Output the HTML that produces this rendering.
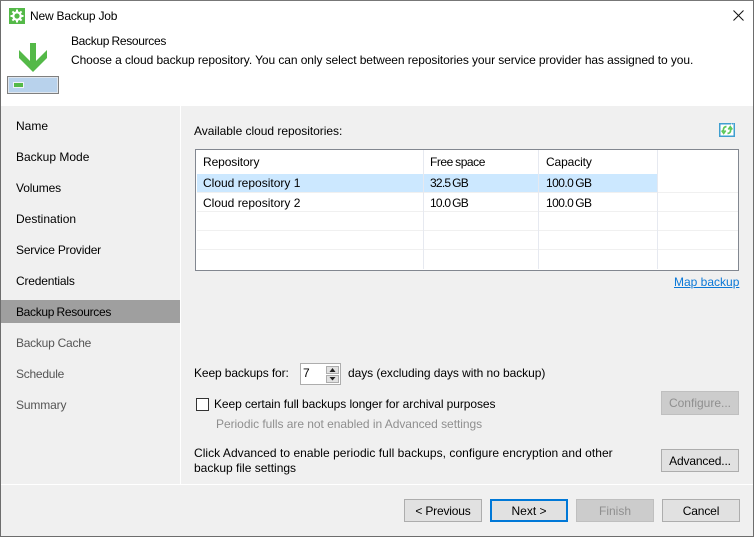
<!DOCTYPE html>
<html><head><meta charset="utf-8"><style>
html,body{margin:0;padding:0;width:754px;height:537px;overflow:hidden;background:#f0f0f0}
body{position:relative;font:12px/16px "Liberation Sans",sans-serif;color:#000}
div{position:absolute;white-space:nowrap}
.btn{box-sizing:border-box;height:23px;border:1px solid #adadad;background:#e1e1e1;text-align:center;line-height:23px}
.dis{background:#ccc;color:#8f8f8f;border-color:#bfbfbf}
.nav{left:16px}
.g{color:#555}
.hl{height:1px;background:#f0f0f0;left:197px;width:541px}
.vl{width:1px;background:#e6e9f0;top:150px;height:119px}
.num{letter-spacing:-.75px;word-spacing:-.8px}
.cap{letter-spacing:-.55px;word-spacing:-.8px}
.br{letter-spacing:-.32px;word-spacing:-.6px}
</style></head><body>
<div style="left:0;top:0;width:754px;height:106px;background:#fff"></div>
<div style="left:180px;top:106px;width:1px;height:378px;background:#fff"></div>
<div style="left:0;top:484px;width:754px;height:1px;background:#fff"></div>
<div style="left:0;top:0;width:754px;height:537px;box-sizing:border-box;border:1px solid #6d6d6d;border-top-color:#777;z-index:9"></div>

<svg style="position:absolute;left:9px;top:8px" width="16" height="16" viewBox="0 0 16 16"><rect width="16" height="16" fill="#54b948"/><circle cx="8" cy="8" r="3.700" fill="none" stroke="#fff" stroke-width="2.200"/><path d="M8 1.500v13M1.500 8h13M3.400 3.400l9.200 9.200M12.600 3.400l-9.200 9.200" stroke="#fff" stroke-width="2" stroke-dasharray="2.400 8.200"/></svg>
<div style="left:30px;top:8px;letter-spacing:-.2px">New Backup Job</div>
<svg style="position:absolute;left:733px;top:10px" width="11" height="11" viewBox="0 0 11 11"><path d="M.5.500l10 10M10.500.500l-10 10" stroke="#111" stroke-width="1" fill="none"/></svg>

<div class="br" style="left:71px;top:33px">Backup Resources</div>
<div style="left:71px;top:52px;letter-spacing:-.085px">Choose a cloud backup repository. You can only select between repositories your service provider has assigned to you.</div>
<svg style="position:absolute;left:19px;top:43px" width="28" height="29" viewBox="0 0 28 29"><path d="M11 0h6v18L28 7v8L14 29 0 15V7l11 11z" fill="#54b948"/></svg>
<div style="left:7px;top:76px;width:52px;height:18px;box-sizing:border-box;border:1px solid #7f7f7f;background:#b8d2ec;box-shadow:inset 0 0 0 1px #dfe6ee"></div>
<div style="left:14px;top:83px;width:9px;height:4px;background:#54b948;box-shadow:0 0 0 1px #eef3f8"></div>

<div class="nav" style="top:118px">Name</div>
<div class="nav" style="top:149px">Backup Mode</div>
<div class="nav" style="top:180px;letter-spacing:-.14px">Volumes</div>
<div class="nav" style="top:211px">Destination</div>
<div class="nav" style="top:242px;letter-spacing:-.19px">Service Provider</div>
<div class="nav" style="top:273px;letter-spacing:-.18px">Credentials</div>
<div style="left:1px;top:300px;width:179px;height:23px;background:#9f9f9f"></div>
<div class="nav br" style="top:304px">Backup Resources</div>
<div class="nav g" style="top:335px;letter-spacing:-.25px">Backup Cache</div>
<div class="nav g" style="top:366px;letter-spacing:-.25px">Schedule</div>
<div class="nav g" style="top:397px;letter-spacing:-.14px">Summary</div>

<div style="left:194px;top:123px;letter-spacing:-.03px">Available cloud repositories:</div>
<svg style="position:absolute;left:719px;top:123px" width="16" height="14" viewBox="0 0 16 14"><rect x=".75" y=".75" width="14.500" height="12.500" fill="#fff" stroke="#3f9fd0" stroke-width="1.500"/><path d="M12 1h1M14 1h.500" stroke="#dfeaf3"/><path d="M7.500 3.500C5 3.800 4 5.500 4.500 8.500M2.700 7.500l2 2.800 2-2.800M8.500 10.500c2.500-.300 3.500-2 3-5M13.300 6.500l-2-2.800-2 2.800" fill="none" stroke="#5ec85a" stroke-width="1.700"/></svg>

<div style="left:195px;top:149px;width:544px;height:122px;box-sizing:border-box;background:#fff;border:1px solid #828790"></div>
<div style="left:197px;top:174px;width:461px;height:18px;background:#cce8ff"></div>
<div class="hl" style="top:192px"></div>
<div class="hl" style="top:211px"></div>
<div class="hl" style="top:230px"></div>
<div class="hl" style="top:249px"></div>
<div class="vl" style="left:423px"></div>
<div class="vl" style="left:538px"></div>
<div class="vl" style="left:657px"></div>
<div style="left:203px;top:154px;letter-spacing:-.1px">Repository</div>
<div style="left:430px;top:154px;letter-spacing:-.45px;word-spacing:-.6px">Free space</div>
<div style="left:546px;top:154px;letter-spacing:-.12px">Capacity</div>
<div style="left:203px;top:175px">Cloud repository 1</div>
<div class="num" style="left:430px;top:175px">32.5 GB</div>
<div class="cap" style="left:546px;top:175px">100.0 GB</div>
<div style="left:203px;top:195px">Cloud repository 2</div>
<div class="num" style="left:430px;top:195px">10.0 GB</div>
<div class="cap" style="left:546px;top:195px">100.0 GB</div>
<div style="left:674px;top:274px;color:#0a78d7;text-decoration:underline">Map backup</div>

<div style="left:194px;top:365px;letter-spacing:-.12px">Keep backups for:</div>
<div style="left:300px;top:363px;width:41px;height:22px;box-sizing:border-box;background:#fff;border:1px solid #adadad"></div>
<div style="left:303px;top:365px">7</div>
<div style="left:326px;top:366px;width:13px;height:8px;background:#e1e1e1;border:1px solid #adadad;box-sizing:border-box"></div>
<div style="left:326px;top:375px;width:13px;height:8px;background:#e1e1e1;border:1px solid #adadad;box-sizing:border-box"></div>
<svg style="position:absolute;left:329px;top:366px" width="7" height="16" viewBox="0 0 7 16"><path d="M3.500 2L6.500 6H.5zM.5 11h6l-3 3.500z" fill="#222"/></svg>
<div style="left:348px;top:365px;letter-spacing:-.06px">days (excluding days with no backup)</div>
<div style="left:196px;top:398px;width:13px;height:13px;box-sizing:border-box;background:#fff;border:1px solid #333"></div>
<div style="left:214px;top:396px;letter-spacing:-.075px">Keep certain full backups longer for archival purposes</div>
<div style="left:216px;top:416px;color:#8f8f8f;letter-spacing:-.04px">Periodic fulls are not enabled in Advanced settings</div>
<div class="btn dis" style="left:661px;top:391px;width:78px;height:24px;line-height:23px">Configure...</div>
<div style="left:194px;top:445px;letter-spacing:.04px">Click Advanced to enable periodic full backups, configure encryption and other</div>
<div style="left:194px;top:460px">backup file settings</div>
<div class="btn" style="left:661px;top:449px;width:78px;letter-spacing:-.15px">Advanced...</div>

<div class="btn" style="left:404px;top:499px;width:78px;letter-spacing:-.18px">&lt; Previous</div>
<div class="btn" style="left:490px;top:499px;width:78px;border:2px solid #0078d7;line-height:21px">Next &gt;</div>
<div class="btn dis" style="left:576px;top:499px;width:78px">Finish</div>
<div class="btn" style="left:662px;top:499px;width:78px;letter-spacing:-.15px">Cancel</div>
</body></html>
